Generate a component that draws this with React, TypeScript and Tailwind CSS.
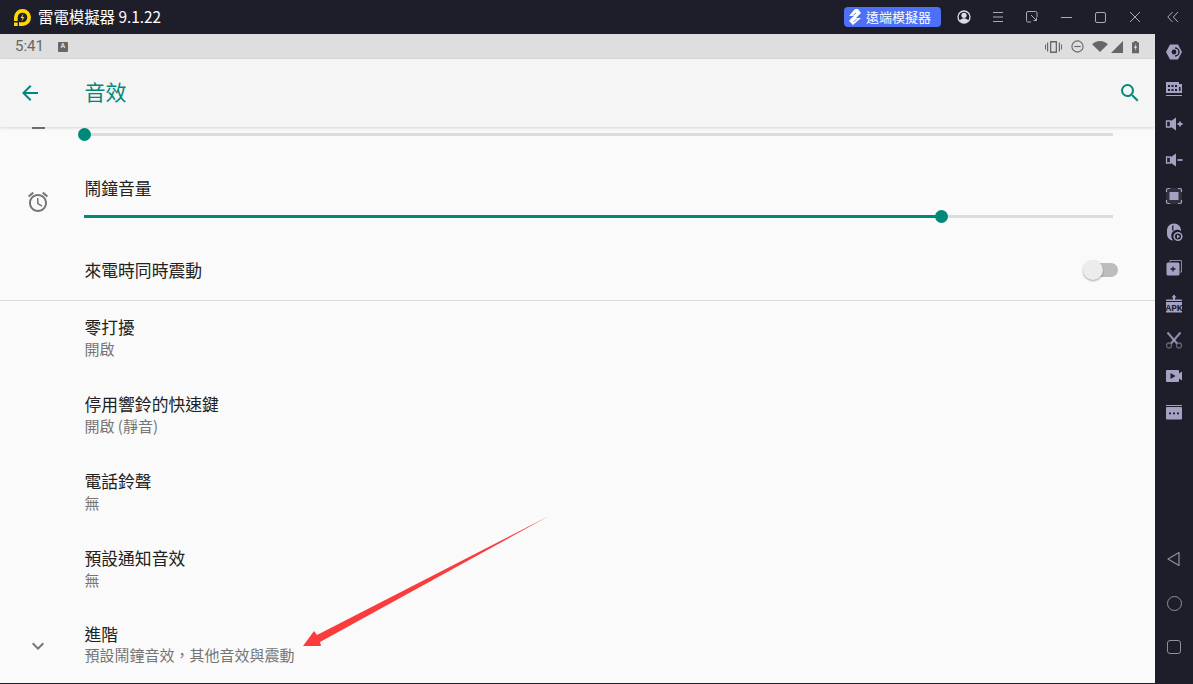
import React from "react";

const cjk = { fontFamily: '"Noto Sans CJK TC", "Noto Sans", sans-serif' };
const P = "#a5a1c3";

function Ico({ children, size = 20 }: { children: React.ReactNode; size?: number }) {
  return (
    <svg width={size} height={size} viewBox="0 0 20 20" fill="none">
      {children}
    </svg>
  );
}

const sideIcons: React.ReactNode[] = [
  <Ico key="a">
    <path d="M6 2.500h8l4 7.500-4 7.500H6L2 10z" fill={P} />
    <path d="M11 6a4 4 0 0 1 0 8" stroke="#1e1e2a" strokeWidth="1.500" />
    <circle cx="10" cy="10" r="2.400" fill="#1e1e2a" />
  </Ico>,
  <Ico key="b">
    <path d="M2 4h13v2h3v9H2z" fill={P} />
    <path d="M2 17.500h16" stroke={P} />
    <path d="M4 7h2v2H4zM7.500 7h2v2h-2zM11 7h2v2h-2zM4 11h2v2H4zM7.500 11h2v2h-2zM11 11h2v2h-2zM15 9h1.500v4H15z" fill="#1e1e2a" />
  </Ico>,
  <Ico key="c">
    <path d="M2.500 7h4v6h-4z" stroke={P} strokeWidth="1.300" />
    <path d="M7 7l5-3.500v13L7 13z" fill={P} />
    <path d="M13.500 10h5M16 7.500v5" stroke={P} strokeWidth="1.800" />
  </Ico>,
  <Ico key="d">
    <path d="M2.500 7h4v6h-4z" stroke={P} strokeWidth="1.300" />
    <path d="M7 7l5-3.500v13L7 13z" fill={P} />
    <path d="M13.500 10h5" stroke={P} strokeWidth="1.800" />
  </Ico>,
  <Ico key="e">
    <rect x="2" y="2" width="16" height="16" rx="2" fill={P} opacity="0.15" />
    <path d="M2.500 6V4a1.500 1.500 0 0 1 1.500-1.500h2M14 2.500h2A1.500 1.500 0 0 1 17.500 4v2M17.500 14v2a1.500 1.500 0 0 1-1.500 1.500h-2M6 17.500H4A1.500 1.500 0 0 1 2.500 16v-2" stroke={P} strokeWidth="1.200" />
    <rect x="5.500" y="6" width="9" height="8" fill={P} />
  </Ico>,
  <Ico key="f">
    <path d="M10 1.500c-4 0-7 3-7 7v3.500c0 3.500 2.500 6.300 6.500 6.500A5.500 5.500 0 0 1 17 9V8.500c0-4-3-7-7-7z" fill={P} />
    <path d="M8.800 3.500v5" stroke="#1e1e2a" strokeWidth="1.300" />
    <circle cx="14" cy="14.500" r="3.800" fill="#1e1e2a" stroke={P} strokeWidth="1.500" />
    <path d="M13 12.500l3 2-3 2z" fill={P} />
  </Ico>,
  <Ico key="g">
    <path d="M6 4V2.500h11.500V14H16" stroke={P} strokeWidth="1" opacity="0.8" />
    <rect x="2.500" y="4.500" width="13" height="13" rx="1.500" fill={P} />
    <path d="M6.500 11h5M9 8.500v5" stroke="#1e1e2a" strokeWidth="1.300" />
  </Ico>,
  <Ico key="h">
    <path d="M10 0.500l2.500 3H11v3H9v-3H7.500z" fill={P} />
    <path d="M2 6.500a1 1 0 0 1 1-1h14a1 1 0 0 1 1 1v.5H2z" fill={P} />
    <rect x="2" y="8" width="16" height="10.500" fill={P} />
    <text x="10" y="16.700" textAnchor="middle" fontSize="9.500" fontWeight="700" fill="#1e1e2a" fontFamily='"Liberation Mono", monospace'>
      APK
    </text>
  </Ico>,
  <Ico key="i">
    <path d="M3.500 2.500l9.500 11" stroke={P} strokeWidth="2" opacity="0.85" />
    <path d="M16.500 2.500L7 13.500" stroke={P} strokeWidth="2" opacity="0.85" />
    <circle cx="5" cy="15.500" r="2.500" stroke={P} strokeWidth="1.300" opacity="0.5" />
    <circle cx="15" cy="15.500" r="2.500" stroke={P} strokeWidth="1.300" opacity="0.5" />
  </Ico>,
  <Ico key="j">
    <path d="M3 4h11a1 1 0 0 1 1 1v2.500l3-2v9l-3-2V15a1 1 0 0 1-1 1H3a1 1 0 0 1-1-1V5a1 1 0 0 1 1-1z" fill={P} />
    <path d="M6.500 7l5 3-5 3z" fill="#1e1e2a" />
  </Ico>,
  <Ico key="k">
    <path d="M2 3.500h16" stroke={P} strokeWidth="1" />
    <rect x="2" y="5" width="16" height="12.500" rx="1" fill={P} />
    <path d="M5 11.300h2M9 11.300h2M13 11.300h2" stroke="#1e1e2a" strokeWidth="1.800" />
  </Ico>,
];

function Row({ title, sub }: { title: string; sub: string }) {
  return (
    <div className="flex h-[77px] shrink-0 flex-col justify-center pb-[3px] pl-[84.500px]">
      <div className="text-[16.800px] leading-[22px] text-[#212121]">{title}</div>
      <div className="text-[15px] leading-[22px] text-[#757575]">{sub}</div>
    </div>
  );
}

export default function App() {
  return (
    <div className="flex h-[684px] w-[1193px] flex-col overflow-hidden bg-[#1e1e2a]" style={cjk}>
      <header className="flex h-[34px] shrink-0 items-center text-white">
        <svg className="ml-[13px]" width="19" height="19" viewBox="0 0 19 19" fill="none">
          <path d="M1 13V9.500A8.500 8.500 0 1 1 9.500 18H6v-3.700h3.500a4.800 4.800 0 1 0-4.800-4.800V13z" fill="#ffd60a" />
          <path d="M1 14.500h3.700V18H1z" fill="#ffd60a" />
          <path d="M10.500 5.500L7.500 10h2l-1 3.500 3-4.500h-2z" fill="#ffd60a" />
        </svg>
        <span className="ml-[6px] pb-px text-[15.400px] leading-none">雷電模擬器 9.1.22</span>
        <div className="ml-auto flex items-center">
          <div className="flex h-[20px] w-[97px] items-center gap-[4px] rounded-[4px] bg-[#4d70f7] pl-[4px] text-[13px] leading-none">
            <svg width="14" height="16" viewBox="0 0 14 16">
              <path d="M7 0L1 7h5L3 9.500 1 12l4 4 8-7H8l3-3 2-2-3-4z" fill="#fff" />
              <path d="M5 6.500L8 4M9 9.500L5.500 13" stroke="#4d70f7" strokeWidth="0.800" />
            </svg>
            <span className="pb-[2px]">遠端模擬器</span>
          </div>
          <div className="ml-[11px] flex h-[34px] w-[24px] items-center justify-center">
            <svg width="14" height="14" viewBox="0 0 14 14">
              <circle cx="7" cy="7" r="6" fill="none" stroke="#dcdcf0" strokeWidth="1.300" />
              <circle cx="7" cy="5.300" r="2.600" fill="#dcdcf0" />
              <path d="M2.500 11c1-2 2.500-2.800 4.500-2.800s3.500.8 4.500 2.800A6 6 0 0 1 7 13a6 6 0 0 1-4.500-2z" fill="#dcdcf0" />
            </svg>
          </div>
          <div className="ml-[10px] flex h-[34px] w-[24px] items-center justify-center">
            <svg width="12" height="12" viewBox="0 0 12 12" stroke="#a9a9bb" fill="none">
              <path d="M1 1.500h10M1 6h10M1 10.500h10" />
            </svg>
          </div>
          <div className="ml-[10px] flex h-[34px] w-[24px] items-center justify-center">
            <svg width="12" height="12" viewBox="0 0 12 12" stroke="#a9a9bb" fill="none">
              <path d="M5 11H2a1.500 1.500 0 0 1-1.500-1.500V2A1.500 1.500 0 0 1 2 .5h7.500A1.500 1.500 0 0 1 11 2v4" />
              <path d="M5 4l5.500 5.500M10.500 6.500v3h-3" />
            </svg>
          </div>
          <div className="ml-[10px] flex h-[34px] w-[24px] items-center justify-center">
            <div className="h-px w-[11px] bg-[#a9a9bb]" />
          </div>
          <div className="ml-[10px] flex h-[34px] w-[24px] items-center justify-center">
            <div className="h-[11px] w-[11px] rounded-[2px] border border-[#a9a9bb]" />
          </div>
          <div className="ml-[11px] flex h-[34px] w-[24px] items-center justify-center">
            <svg width="12" height="12" viewBox="0 0 12 12" stroke="#a9a9bb" fill="none">
              <path d="M1 1l10 10M11 1L1 11" />
            </svg>
          </div>
          <div className="ml-[14px] mr-[8px] flex h-[34px] w-[24px] items-center justify-center">
            <svg width="12" height="12" viewBox="0 0 12 12" stroke="#a9a9bb" fill="none">
              <path d="M5.500 1L.8 6l4.700 5M11 1L6.300 6 11 11" />
            </svg>
          </div>
        </div>
      </header>

      <div className="flex min-h-0 flex-1">
        <main className="mb-px flex w-[1155px] shrink-0 flex-col overflow-hidden bg-[#fafafa]">
          <div className="flex h-[25px] shrink-0 items-center bg-[#dedede] text-[#666]">
            <span className="ml-[15px] text-[15px]" style={{ fontFamily: "Roboto, sans-serif" }}>
              5:41
            </span>
            <span className="ml-[14px] flex h-[10px] w-[10px] items-center justify-center rounded-[1px] bg-[#666] text-[7px] font-bold leading-none text-[#dedede]" style={{ fontFamily: "Roboto, sans-serif" }}>
              A
            </span>
            <div className="ml-auto mr-[16px] flex items-center">
              <svg width="17" height="14" viewBox="0 0 17 14" fill="#666">
                <path d="M0 4.500h1v5H0zM2 2.500h1.200v9H2zM13.800 2.500H15v9h-1.200zM16 4.500h1v5h-1z" />
                <path fillRule="evenodd" d="M5 1h7v12H5zM6.300 2.500v9h4.400v-9z" />
              </svg>
              <svg className="ml-[9px]" width="13" height="13" viewBox="0 0 14 14" fill="none" stroke="#666" strokeWidth="1.200">
                <circle cx="7" cy="7" r="6" />
                <path d="M3.500 7h7" />
              </svg>
              <svg className="ml-[8px]" width="16" height="13" viewBox="0 0 17 14" fill="#666">
                <path d="M0 4.500C2 2.500 5 1 8.500 1S15 2.500 17 4.500L8.500 13z" />
              </svg>
              <svg className="ml-[3px]" width="12" height="12" viewBox="0 0 13 13" fill="#666">
                <path d="M13 0v13H0z" />
              </svg>
              <svg className="ml-[9px]" width="7" height="14" viewBox="0 0 8 14">
                <path d="M2.500 0h3v1.500H8V14H0V1.500h2.500z" fill="#666" />
                <path d="M4.500 3L2.300 8h1.500l-.3 3.500L5.800 6.500H4.200z" fill="#dedede" />
              </svg>
            </div>
          </div>

          <div className="z-10 flex h-[68px] shrink-0 items-center bg-[#f5f5f5] shadow-[0_1px_3px_rgba(0,0,0,0.15)]">
            <svg className="ml-[18px]" width="24" height="24" viewBox="0 0 24 24" fill="#00897b">
              <path d="M20 11H7.830l5.590-5.590L12 4l-8 8 8 8 1.410-1.410L7.830 13H20z" />
            </svg>
            <span className="ml-[42.500px] pb-[4px] text-[21px] leading-none text-[#00897b]">音效</span>
            <svg className="ml-auto mr-[13px]" width="24" height="24" viewBox="0 0 24 24" fill="#00897b">
              <path d="M15.500 14h-.79l-.28-.27A6.470 6.470 0 0 0 16 9.500 6.500 6.500 0 1 0 9.500 16c1.610 0 3.090-.59 4.230-1.570l.27.28v.79l5 4.990L20.490 19l-4.990-5zm-6 0C7.010 14 5 11.990 5 9.500S7.010 5 9.500 5 14 7.010 14 9.500 11.990 14 9.500 14z" />
            </svg>
          </div>

          <div className="flex min-h-0 flex-1 flex-col">
            <div className="flex h-[15px] shrink-0 items-center">
              <div className="flex w-[76px] justify-center">
                <div className="h-[2px] w-[13px] -translate-y-[7px] bg-[#757575]" />
              </div>
              <div className="relative ml-[8px] h-[3px] w-[1029px] bg-[#dcdcdc]">
                <div className="absolute left-[-6.500px] top-[-5px] h-[13px] w-[13px] rounded-full bg-[#00897b]" />
              </div>
            </div>

            <div className="flex h-[98px] shrink-0">
              <div className="flex w-[76px] shrink-0 items-center justify-center pt-[22px]">
                <svg width="24" height="24" viewBox="0 0 24 24" fill="#757575">
                  <path d="M22 5.720l-4.600-3.860-1.290 1.530 4.600 3.860L22 5.720zM7.880 3.390L6.600 1.860 2 5.710l1.290 1.530 4.590-3.850zM12.500 8H11v6l4.750 2.850.75-1.230-4-2.370V8zM12 4c-4.970 0-9 4.030-9 9s4.030 9 9 9 9-4.030 9-9-4.030-9-9-9zm0 16c-3.870 0-7-3.130-7-7s3.130-7 7-7 7 3.130 7 7-3.130 7-7 7z" />
                </svg>
              </div>
              <div className="ml-[8px] flex w-[1029px] flex-col">
                <div className="mt-[34px] pl-[0.500px] text-[16.800px] leading-[24px] text-[#212121]">鬧鐘音量</div>
                <div className="relative mt-[15px] h-[3px] w-full bg-[#dcdcdc]">
                  <div className="h-full w-[857px] bg-[#00897b]" />
                  <div className="absolute left-[851px] top-[-5px] h-[13px] w-[13px] rounded-full bg-[#00897b]" />
                </div>
              </div>
            </div>

            <div className="flex h-[61px] shrink-0 items-center justify-between border-b border-[#dcdcdc]">
              <span className="ml-[84.500px] text-[16.800px] leading-[24px] text-[#212121]">來電時同時震動</span>
              <div className="relative mr-[37px] h-[14px] w-[34px] rounded-full bg-[#bdbdbd]">
                <div className="absolute left-[-1px] top-[-3px] h-[20px] w-[20px] rounded-full bg-[#ececec] shadow-[0_1px_2px_rgba(0,0,0,0.35)]" />
              </div>
            </div>

            <div className="flex flex-col">
              <Row title="零打擾" sub="開啟" />
              <Row title="停用響鈴的快速鍵" sub="開啟 (靜音)" />
              <Row title="電話鈴聲" sub="無" />
              <Row title="預設通知音效" sub="無" />
              <div className="flex h-[77px] shrink-0 items-center pb-[7px]">
                <div className="flex w-[76px] shrink-0 justify-center pt-[3px]">
                  <svg width="24" height="24" viewBox="0 0 24 24" fill="#757575">
                    <path d="M16.590 8.590L12 13.170 7.410 8.590 6 10l6 6 6-6z" />
                  </svg>
                </div>
                <div className="ml-[8.500px] flex flex-col">
                  <div className="text-[16.800px] leading-[22px] text-[#212121]">進階</div>
                  <div className="text-[15px] leading-[20px] text-[#757575]">預設鬧鐘音效，其他音效與震動</div>
                </div>
              </div>
            </div>
          </div>
        </main>

        <aside className="flex w-[38px] shrink-0 flex-col items-center">
          {sideIcons.map((icon, i) => (
            <div key={i} className="flex h-[36px] w-full items-center justify-center">
              {icon}
            </div>
          ))}
          <div className="mt-auto flex flex-col items-center pb-[15px]">
            <div className="flex h-[44px] items-center justify-center">
              <svg width="16" height="16" viewBox="0 0 16 16" fill="none" stroke="#8f8fa3" strokeWidth="1.200" strokeLinejoin="round">
                <path d="M13 1.500v13L2 8z" />
              </svg>
            </div>
            <div className="flex h-[44px] items-center justify-center">
              <div className="h-[15px] w-[15px] rounded-full border border-[#8f8fa3]" />
            </div>
            <div className="flex h-[44px] items-center justify-center">
              <div className="h-[14px] w-[14px] rounded-[3px] border border-[#8f8fa3]" />
            </div>
          </div>
        </aside>
      </div>

      <svg className="absolute left-[300px] top-[510px]" width="255" height="140" viewBox="300 510 255 140">
        <path d="M549 516L320 642 321 646 303 646 314 631 317 635z" fill="#fa3c3c" />
      </svg>
    </div>
  );
}
